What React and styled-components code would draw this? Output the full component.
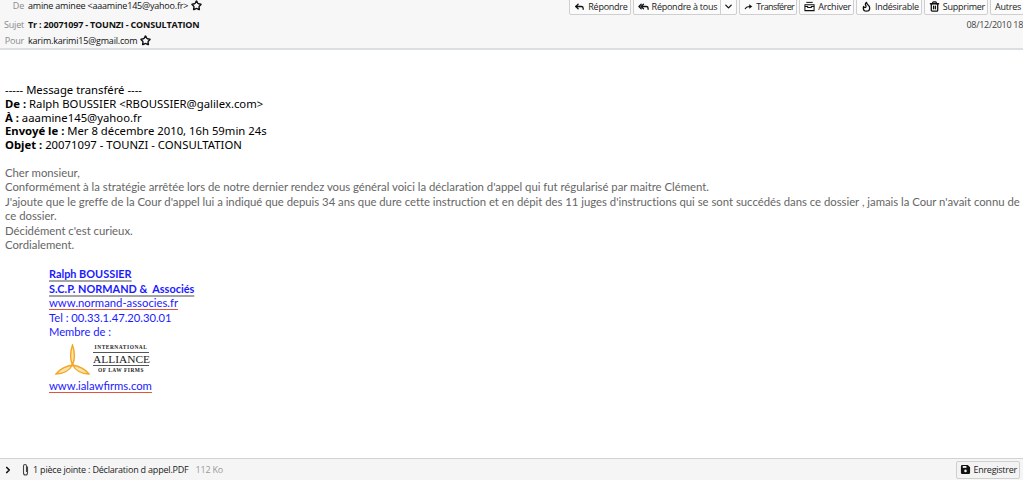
import React from "react";
import styled, { createGlobalStyle } from "styled-components";
import { Reply, ReplyAll, ChevronDown, ChevronRight, Flame, Trash2, Star } from "lucide-react";

const GlobalStyle = createGlobalStyle`
  html, body { margin: 0; height: 100%; overflow: hidden; background: #fff; }
`;

const Page = styled.div`
  width: 1023px;
  height: 480px;
  display: flex;
  flex-direction: column;
  overflow: hidden;
  font-family: "Open Sans", "Noto Sans", sans-serif;
`;

const Header = styled.header`
  height: 48px;
  flex: none;
  background: #f7f7f7;
  border-bottom: 2px solid #dcdfe2;
  display: flex;
  justify-content: space-between;
`;

const Fields = styled.div`
  display: flex;
  flex-direction: column;
`;

const Field = styled.div`
  height: 17px;
  margin-top: ${p => p.$top || 0}px;
  display: flex;
  align-items: center;
  font-size: 9px;
  letter-spacing: -0.2px;
  color: #111;
  font-weight: ${p => (p.$bold ? 700 : 400)};
  white-space: nowrap;
`;

const FieldLabel = styled.span`
  width: 24px;
  margin-right: 4px;
  text-align: right;
  color: #8a8a8a;
  font-weight: 400;
`;

const StarIcon = styled(Star)`
  width: 11px;
  height: 11px;
  margin-left: 3px;
  color: #111;
  stroke-width: 3;
`;

const Actions = styled.div`
  display: flex;
  flex-direction: column;
  align-items: flex-end;
`;

const Toolbar = styled.div`
  display: flex;
  gap: 2px;
  margin-top: -2px;
  margin-right: -1px;
`;

const Button = styled.div`
  height: 15px;
  padding: 0 2px 0 4px;
  display: flex;
  align-items: center;
  gap: 3px;
  background: #fbfbfb;
  border: 1px solid #cfcfcf;
  border-radius: 2px;
  font-size: 9px;
  letter-spacing: ${p => (p.$tight ? -0.6 : -0.25)}px;
  color: #222;
  white-space: nowrap;
  svg { width: ${p => p.$icon || 11}px; height: 11px; color: #111; }
  svg.lucide { stroke-width: 2.8; }
`;

const SplitPart = styled.span`
  display: flex;
  align-items: center;
  gap: 3px;
  & + & { border-left: 1px solid #cfcfcf; margin-left: 0; padding-left: 2px; height: 100%; }
`;

const DateText = styled.div`
  margin-top: 3px;
  font-size: 9px;
  letter-spacing: -0.3px;
  color: #444;
  white-space: nowrap;
`;

const Body = styled.main`
  flex: 1;
  padding: 33px 0 0 5px;
  background: #fff;
`;

const Forwarded = styled.div`
  font-family: "Noto Sans", sans-serif;
  font-size: 11.3px;
  line-height: 13.8px;
  color: #000;
`;

const Message = styled.div`
  margin-top: 14px;
  font-family: "Lato", sans-serif;
  font-size: 11.35px;
  letter-spacing: -0.02px;
  line-height: 14.4px;
  color: #666;
  width: 1018px;
`;

const Signature = styled.div`
  margin: 15px 0 0 44px;
  font-family: "Lato", sans-serif;
  font-size: 11.2px;
  line-height: 14.4px;
  color: #1a1aff;
`;

const SigName = styled.div`
  font-weight: 700;
  font-size: 10.9px;
  text-decoration: underline;
  text-decoration-color: #a5a5a5;
  text-decoration-thickness: 2px;
  text-underline-offset: 2px;
`;

const SigLink = styled.div`
  font-size: 11.3px;
  text-decoration: underline;
  text-decoration-color: #e0543a;
  text-decoration-thickness: 1px;
  text-underline-offset: 2px;
`;

const Logo = styled.div`
  height: 40px;
  margin-left: 6px;
  display: flex;
  align-items: center;
  gap: 3px;
`;

const LogoText = styled.div`
  width: 56px;
  display: flex;
  flex-direction: column;
  font-family: "Liberation Serif", serif;
  color: #222;
  text-align: center;
`;

const LogoSmall = styled.div`
  font-size: 5.4px;
  line-height: 7px;
  letter-spacing: 0.55px;
  font-weight: 700;
  white-space: nowrap;
`;

const LogoBig = styled.div`
  font-size: 11.4px;
  line-height: 12px;
  border-top: 1px solid #555;
  border-bottom: 1px solid #555;
  margin: 1px 0;
`;

const Footer = styled.footer`
  height: 21px;
  flex: none;
  background: #f5f5f5;
  border-top: 1px solid #cfd3d6;
  display: flex;
  align-items: center;
  justify-content: space-between;
  font-size: 9px;
  letter-spacing: -0.2px;
  color: #222;
`;

const Attachment = styled.div`
  display: flex;
  align-items: center;
  padding-left: 3px;
  white-space: nowrap;
`;

const Arrow = styled(ChevronRight)`
  width: 10px;
  height: 10px;
  stroke-width: 4;
  color: #111;
  margin-right: 9px;
`;

const Clip = styled.svg`
  width: 7px;
  height: 13px;
  margin-right: 4px;
`;

const Size = styled.span`
  color: #999;
  margin-left: 7px;
`;

const SaveButton = styled(Button)`
  height: 16px;
  margin-right: 3px;
  padding: 0 2px 0 3px;
  gap: 2px;
  background: #f3f3f3;
`;

const ForwardIcon = () => (
  <svg viewBox="0 0 12 12" fill="none" stroke="#111" strokeWidth="1.6">
    <path d="M1.5 9.5 C2.5 6.8 5 6 8 6" />
    <path d="M7 3 L11 6 L7 9 Z" fill="#111" stroke="none" />
  </svg>
);

const ArchiveIcon = () => (
  <svg viewBox="0 0 12 12" fill="none" stroke="#111" strokeWidth="1.1">
    <path d="M2.5 1.5 H9.5" />
    <path d="M1 4 H11 V10.5 H1 Z" />
    <path d="M1 6 H4 V7.2 H8 V6 H11" />
  </svg>
);

const SaveIcon = () => (
  <svg viewBox="0 0 12 12">
    <path fill="#111" d="M1 2.5 A1.5 1.5 0 0 1 2.5 1 H8.5 L11 3.5 V9.5 A1.5 1.5 0 0 1 9.5 11 H2.5 A1.5 1.5 0 0 1 1 9.5 Z" />
    <rect x="3" y="2.2" width="4" height="2" fill="#f3f3f3" />
    <circle cx="6" cy="7.5" r="1.4" fill="#f3f3f3" />
  </svg>
);

export default function App() {
  return (
    <Page>
      <GlobalStyle />
      <Header>
        <Fields>
          <Field $top={-3}><FieldLabel>De</FieldLabel>amine aminee &lt;aaamine145@yahoo.fr&gt;<StarIcon /></Field>
          <Field $top={3} $bold><FieldLabel>Sujet</FieldLabel>Tr : 20071097 - TOUNZI - CONSULTATION</Field>
          <Field><FieldLabel>Pour</FieldLabel>karim.karimi15@gmail.com<StarIcon /></Field>
        </Fields>
        <Actions>
          <Toolbar>
            <Button><Reply />Répondre</Button>
            <Button>
              <SplitPart><ReplyAll />Répondre à tous</SplitPart>
              <SplitPart><ChevronDown /></SplitPart>
            </Button>
            <Button $tight $icon={9}><ForwardIcon />Transférer</Button>
            <Button><ArchiveIcon />Archiver</Button>
            <Button><Flame />Indésirable</Button>
            <Button><Trash2 />Supprimer</Button>
            <Button>Autres</Button>
          </Toolbar>
          <DateText>08/12/2010 18</DateText>
        </Actions>
      </Header>
      <Body>
        <Forwarded>
          <div>----- Message transféré ----</div>
          <div><b>De :</b> Ralph BOUSSIER &lt;RBOUSSIER@galilex.com&gt;</div>
          <div><b>À :</b> aaamine145@yahoo.fr</div>
          <div><b>Envoyé le :</b> Mer 8 décembre 2010, 16h 59min 24s</div>
          <div><b>Objet :</b> 20071097 - TOUNZI - CONSULTATION</div>
        </Forwarded>
        <Message>
          <div>Cher monsieur,</div>
          <div>Conformément à la stratégie arrêtée lors de notre dernier rendez vous général voici la déclaration d'appel qui fut régularisé par maitre Clément.</div>
          <div>J'ajoute que le greffe de la Cour d'appel lui a indiqué que depuis 34 ans que dure cette instruction et en dépit des 11 juges d'instructions qui se sont succédés dans ce dossier , jamais la Cour n'avait connu de ce dossier.</div>
          <div>Décidément c'est curieux.</div>
          <div>Cordialement.</div>
        </Message>
        <Signature>
          <SigName>Ralph BOUSSIER</SigName>
          <SigName>S.C.P. NORMAND &amp;&nbsp; Associés</SigName>
          <SigLink>www.normand-associes.fr</SigLink>
          <div>Tel : 00.33.1.47.20.30.01</div>
          <div>Membre de :</div>
          <Logo>
            <svg width="35" height="31" viewBox="0 0 35 31" fill="#fbe3ac" stroke="#f2a726" strokeWidth="1.4">
              <path d="M17.5 1 C15 8 15 15 17.5 21 C20 15 20 8 17.5 1 Z" />
              <path d="M17.5 21 C11 22 5 25 1 30 C8 30 14 27 17.5 21 Z" />
              <path d="M17.5 21 C24 22 30 25 34 30 C27 30 21 27 17.5 21 Z" />
            </svg>
            <LogoText>
              <LogoSmall>INTERNATIONAL</LogoSmall>
              <LogoBig>ALLIANCE</LogoBig>
              <LogoSmall>OF LAW FIRMS</LogoSmall>
            </LogoText>
          </Logo>
          <SigLink>www.ialawfirms.com</SigLink>
        </Signature>
      </Body>
      <Footer>
        <Attachment>
          <Arrow />
          <Clip viewBox="0 0 7 13" fill="none" stroke="#444" strokeWidth="1.1">
            <path d="M5.5 3.5 V10 a2 2 0 0 1 -4 0 V3 a1.5 1.5 0 0 1 3 0 V9" />
          </Clip>
          1 pièce jointe : Déclaration d appel.PDF
          <Size>112 Ko</Size>
        </Attachment>
        <SaveButton><SaveIcon />Enregistrer</SaveButton>
      </Footer>
    </Page>
  );
}
